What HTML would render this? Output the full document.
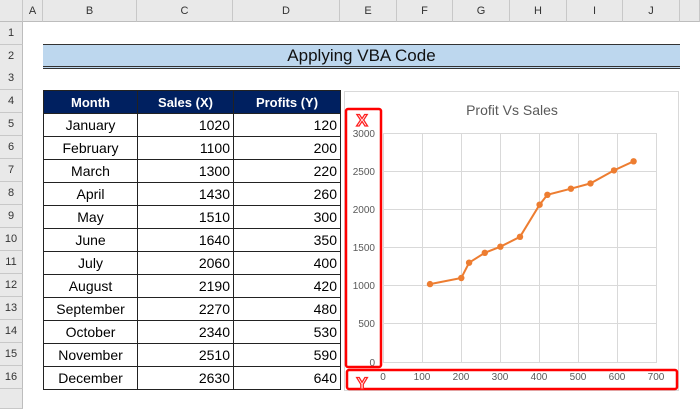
<!DOCTYPE html><html><head><style>
*{margin:0;padding:0;box-sizing:border-box}
body{width:700px;height:409px;background:#fff;position:relative;overflow:hidden;font-family:"Liberation Sans",sans-serif}
.a{position:absolute}
.ch{position:absolute;top:0;height:22px;background:#e9e9e9;border-right:1px solid #c8c8c8;border-bottom:1px solid #bdbdbd;font-size:11px;color:#333;text-align:center;line-height:22px}
.rh{position:absolute;left:0;width:23px;height:23px;background:#e9e9e9;border-bottom:1px solid #c8c8c8;border-right:1px solid #bdbdbd;font-size:11px;color:#333;text-align:center;line-height:23px}
table{position:absolute;left:43px;top:90px;border-collapse:collapse;font-size:14px}
td{height:23px;border:1px solid #222;padding:0 3px;line-height:21px}
td.m{text-align:center}td.n{text-align:right}
tr.h td{background:#002060;color:#fff;font-weight:bold;text-align:center;font-size:13px}
</style></head><body>
<div class="ch" style="left:0;width:23px"></div>
<div class="ch" style="left:23px;width:20px">A</div>
<div class="ch" style="left:43px;width:94px">B</div>
<div class="ch" style="left:137px;width:96px">C</div>
<div class="ch" style="left:233px;width:107px">D</div>
<div class="ch" style="left:340px;width:57px">E</div>
<div class="ch" style="left:397px;width:56px">F</div>
<div class="ch" style="left:453px;width:57px">G</div>
<div class="ch" style="left:510px;width:57px">H</div>
<div class="ch" style="left:567px;width:56px">I</div>
<div class="ch" style="left:623px;width:57px">J</div>
<div class="ch" style="left:680px;width:20px"></div>
<div class="rh" style="top:22px">1</div><div class="rh" style="top:45px">2</div><div class="rh" style="top:67px">3</div><div class="rh" style="top:90px">4</div><div class="rh" style="top:113px">5</div><div class="rh" style="top:136px">6</div><div class="rh" style="top:159px">7</div><div class="rh" style="top:182px">8</div><div class="rh" style="top:205px">9</div><div class="rh" style="top:228px">10</div><div class="rh" style="top:251px">11</div><div class="rh" style="top:274px">12</div><div class="rh" style="top:297px">13</div><div class="rh" style="top:320px">14</div><div class="rh" style="top:343px">15</div><div class="rh" style="top:366px">16</div><div class="rh" style="top:389px;height:20px"></div>
<div class="a" style="left:43px;top:44px;width:637px;height:25px;background:#bdd7ee;border-top:1px solid #333;border-bottom:3px double #333;text-align:center;font-size:17px;line-height:22px;color:#111">Applying VBA Code</div>
<table>
<tr class="h"><td style="width:94px">Month</td><td style="width:96px">Sales (X)</td><td style="width:107px">Profits (Y)</td></tr>
<tr><td class="m">January</td><td class="n">1020</td><td class="n">120</td></tr>
<tr><td class="m">February</td><td class="n">1100</td><td class="n">200</td></tr>
<tr><td class="m">March</td><td class="n">1300</td><td class="n">220</td></tr>
<tr><td class="m">April</td><td class="n">1430</td><td class="n">260</td></tr>
<tr><td class="m">May</td><td class="n">1510</td><td class="n">300</td></tr>
<tr><td class="m">June</td><td class="n">1640</td><td class="n">350</td></tr>
<tr><td class="m">July</td><td class="n">2060</td><td class="n">400</td></tr>
<tr><td class="m">August</td><td class="n">2190</td><td class="n">420</td></tr>
<tr><td class="m">September</td><td class="n">2270</td><td class="n">480</td></tr>
<tr><td class="m">October</td><td class="n">2340</td><td class="n">530</td></tr>
<tr><td class="m">November</td><td class="n">2510</td><td class="n">590</td></tr>
<tr><td class="m">December</td><td class="n">2630</td><td class="n">640</td></tr>
</table>
<svg class="a" style="left:0;top:0" width="700" height="409" font-family="Liberation Sans, sans-serif">
<rect x="344.5" y="91.5" width="334" height="299" fill="#fff" stroke="#d9d9d9"/>
<text x="512" y="115" font-size="14" fill="#595959" text-anchor="middle">Profit Vs Sales</text>
<g stroke="#d9d9d9" stroke-width="1">
<line x1="383" y1="133.5" x2="657" y2="133.5"/><line x1="383" y1="171.5" x2="657" y2="171.5"/><line x1="383" y1="209.5" x2="657" y2="209.5"/><line x1="383" y1="247.5" x2="657" y2="247.5"/><line x1="383" y1="285.5" x2="657" y2="285.5"/><line x1="383" y1="323.5" x2="657" y2="323.5"/><line x1="383" y1="362.5" x2="657" y2="362.5"/>
<line x1="383.5" y1="133" x2="383.5" y2="362"/><line x1="422.5" y1="133" x2="422.5" y2="362"/><line x1="461.5" y1="133" x2="461.5" y2="362"/><line x1="500.5" y1="133" x2="500.5" y2="362"/><line x1="539.5" y1="133" x2="539.5" y2="362"/><line x1="578.5" y1="133" x2="578.5" y2="362"/><line x1="617.5" y1="133" x2="617.5" y2="362"/><line x1="656.5" y1="133" x2="656.5" y2="362"/>
</g>
<g font-size="10" fill="#595959" text-anchor="end">
<text x="375" y="137">3000</text><text x="375" y="175">2500</text><text x="375" y="213">2000</text><text x="375" y="251">1500</text><text x="375" y="289">1000</text><text x="375" y="327">500</text><text x="375" y="366">0</text>
</g>
<g font-size="10" fill="#595959" text-anchor="middle">
<text x="383" y="380">0</text><text x="422" y="380">100</text><text x="461" y="380">200</text><text x="500" y="380">300</text><text x="539" y="380">400</text><text x="578" y="380">500</text><text x="617" y="380">600</text><text x="656" y="380">700</text>
</g>
<polyline fill="none" stroke="#ed7d31" stroke-width="2" points="430,284.1 461.3,278 469.1,262.7 484.8,252.8 500.4,246.7 520,236.8 539.6,204.7 547.4,194.8 570.9,188.7 590.5,183.4 614,170.4 633.6,161.3"/>
<g fill="#ed7d31"><circle cx="430" cy="284.1" r="3.2"/><circle cx="461.3" cy="278" r="3.2"/><circle cx="469.1" cy="262.7" r="3.2"/><circle cx="484.8" cy="252.8" r="3.2"/><circle cx="500.4" cy="246.7" r="3.2"/><circle cx="520" cy="236.8" r="3.2"/><circle cx="539.6" cy="204.7" r="3.2"/><circle cx="547.4" cy="194.8" r="3.2"/><circle cx="570.9" cy="188.7" r="3.2"/><circle cx="590.5" cy="183.4" r="3.2"/><circle cx="614" cy="170.4" r="3.2"/><circle cx="633.6" cy="161.3" r="3.2"/></g>
<rect x="346" y="109" width="35" height="258" rx="2" fill="none" stroke="#ff0000" stroke-width="2.5"/>
<rect x="347" y="370" width="330" height="19" rx="2" fill="none" stroke="#ff0000" stroke-width="2.5"/>
<text x="362" y="126" font-size="17" font-weight="bold" fill="#fff" stroke="#ff2020" stroke-width="1.3" text-anchor="middle">X</text>
<text x="362" y="389" font-size="17" font-weight="bold" fill="#fff" stroke="#ff2020" stroke-width="1.3" text-anchor="middle">Y</text>
</svg>
</body></html>
